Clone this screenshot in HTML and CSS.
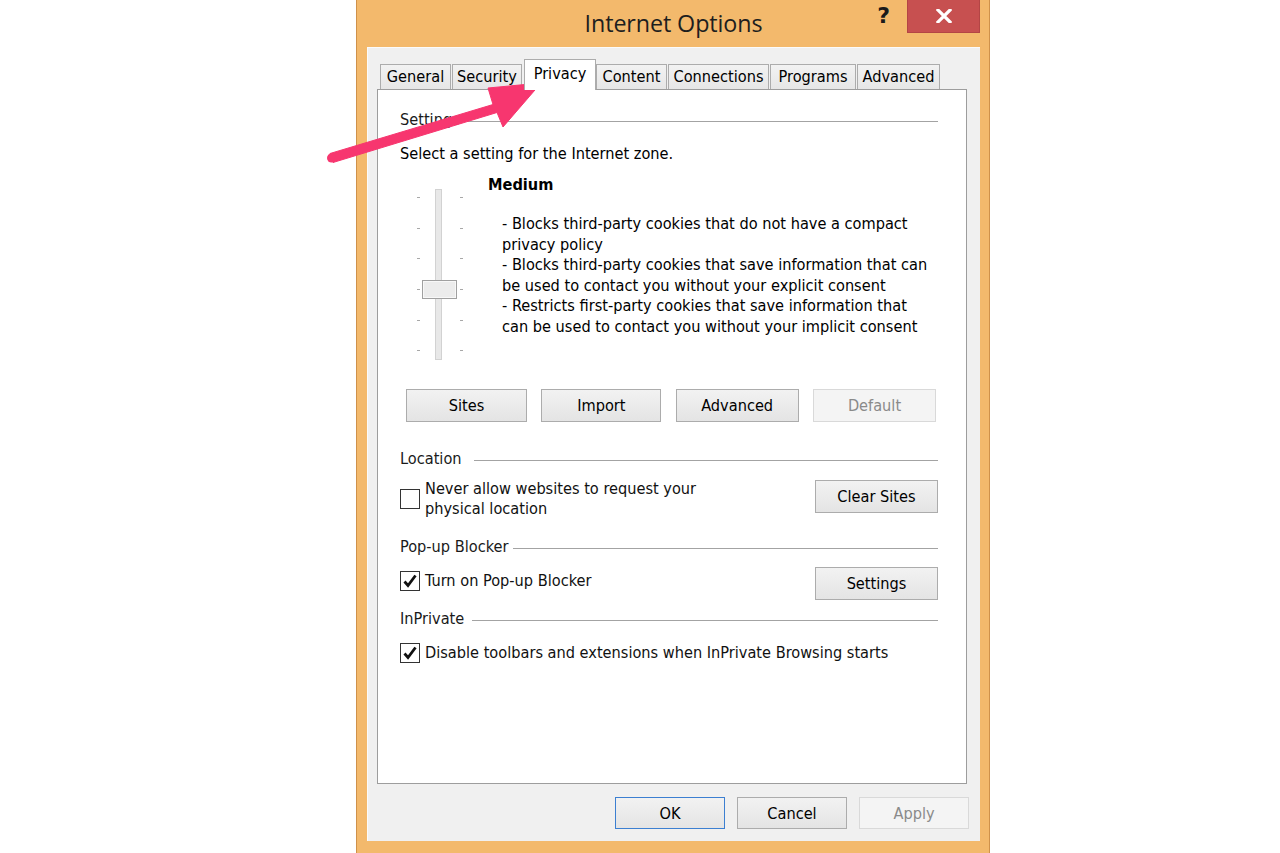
FILE: index.html
```html
<!DOCTYPE html>
<html>
<head>
<meta charset="utf-8">
<link rel="stylesheet" href="styles.css">
</head>
<body>
<div class="window">
  <div class="titlebar">
    <div class="tb-spacer"></div>
    <div class="tb-title">Internet Options</div>
    <div class="tb-controls">
      <span class="tb-help">?</span>
      <span class="tb-close">
        <svg width="16" height="14" viewBox="0 0 16 14"><path d="M2 1 L14 13 M14 1 L2 13" stroke="#fff" stroke-width="3.2" stroke-linecap="square"/></svg>
      </span>
    </div>
  </div>
  <div class="client">
    <div class="tabs">
      <div class="tab w-general">General</div>
      <div class="tab w-security">Security</div>
      <div class="tab tab-sel w-privacy">Privacy</div>
      <div class="tab w-content">Content</div>
      <div class="tab w-connections">Connections</div>
      <div class="tab w-programs">Programs</div>
      <div class="tab w-advanced">Advanced</div>
    </div>
    <div class="panel">
      <div class="group-head g-settings"><span>Settings</span><i class="rule"></i></div>
      <div class="intro">Select a setting for the Internet zone.</div>
      <div class="slider-row">
        <svg class="slider" width="54" height="176" viewBox="0 0 54 176">
          <g stroke="#a8a8a8" stroke-width="1">
            <path d="M4 10.5h3M47 10.5h3"/>
            <path d="M4 41.5h3M47 41.5h3"/>
            <path d="M4 71.5h3M47 71.5h3"/>
            <path d="M4 102.5h3M47 102.5h3"/>
            <path d="M4 133.5h3M47 133.5h3"/>
            <path d="M4 163.5h3M47 163.5h3"/>
          </g>
          <rect x="22.5" y="2.5" width="6" height="170" fill="#e8e8e8" stroke="#d2d2d2"/>
          <rect x="9.5" y="93.5" width="34" height="18" fill="#ececec" stroke="#a0a0a0"/>
          <rect x="10.5" y="94.5" width="32" height="16" fill="none" stroke="#f8f8f8"/>
        </svg>
        <div class="level">
          <div class="level-name">Medium</div>
          <div class="level-desc">- Blocks third-party cookies that do not have a compact<br>privacy policy<br>- Blocks third-party cookies that save information that can<br>be used to contact you without your explicit consent<br>- Restricts first-party cookies that save information that<br>can be used to contact you without your implicit consent</div>
        </div>
      </div>
      <div class="btn-row">
        <button class="btn w121">Sites</button>
        <button class="btn w120">Import</button>
        <button class="btn w123">Advanced</button>
        <button class="btn w123 disabled">Default</button>
      </div>
      <div class="group-head g-location"><span>Location</span><i class="rule"></i></div>
      <div class="opt-row row-location">
        <div class="check-label">
          <span class="cb"></span>
          <span class="cb-text">Never allow websites to request your<br>physical location</span>
        </div>
        <button class="btn w123 btn-side btn-up">Clear Sites</button>
      </div>
      <div class="group-head g-popup"><span>Pop-up Blocker</span><i class="rule"></i></div>
      <div class="opt-row row-popup">
        <div class="check-label lift">
          <span class="cb"><svg width="18" height="18" viewBox="0 0 18 18"><path d="M3.5 9.5 L7 13.5 L14.5 3.5" fill="none" stroke="#111" stroke-width="2.8"/></svg></span>
          <span class="cb-text">Turn on Pop-up Blocker</span>
        </div>
        <button class="btn w123 btn-side">Settings</button>
      </div>
      <div class="group-head g-inprivate"><span>InPrivate</span><i class="rule"></i></div>
      <div class="opt-row row-inprivate">
        <div class="check-label">
          <span class="cb"><svg width="18" height="18" viewBox="0 0 18 18"><path d="M3.5 9.5 L7 13.5 L14.5 3.5" fill="none" stroke="#111" stroke-width="2.8"/></svg></span>
          <span class="cb-text">Disable toolbars and extensions when InPrivate Browsing starts</span>
        </div>
      </div>
    </div>
    <div class="footer">
      <button class="btn fbtn default">OK</button>
      <button class="btn fbtn">Cancel</button>
      <button class="btn fbtn disabled">Apply</button>
    </div>
  </div>
</div>
<svg class="callout" width="1280" height="200" viewBox="0 0 1280 200">
  <polygon points="330,153.5 493,104.5 488,88 541,83 503,127 497,112.5 333,162.5" fill="#f7366f" stroke="#f7366f" stroke-width="1" stroke-linejoin="round"/>
  <circle cx="331.5" cy="158" r="4.5" fill="#f7366f"/>
</svg>
</body>
</html>
```
FILE: styles.css
```css
* { box-sizing: border-box; }
html, body { margin: 0; padding: 0; background: #ffffff; }
body {
  width: 1280px;
  height: 853px;
  overflow: hidden;
  position: relative;
  font-family: "DejaVu Sans Condensed", "DejaVu Sans", sans-serif;
  font-size: 16.2px;
  color: #000;
}

.window {
  margin-left: 356px;
  width: 634px;
  height: 853px;
  background: #f3b96c;
  border-left: 1px solid #cf914a;
  border-right: 1px solid #cf914a;
  padding: 0 9px 0 10px;
  display: flex;
  flex-direction: column;
}

.titlebar {
  height: 47px;
  display: grid;
  grid-template-columns: 1fr auto 1fr;
  align-items: start;
  margin: 0 -10px 0 -10px;
  padding: 0 10px 0 10px;
}
.tb-title {
  font-family: "Open Sans", "Noto Sans", sans-serif;
  font-size: 23.3px;
  color: #1e1e1e;
  padding-top: 6px;
  line-height: 34px;
  letter-spacing: -0.1px;
}
.tb-controls {
  justify-self: end;
  display: flex;
  align-items: flex-start;
}
.tb-help {
  font-family: "DejaVu Sans", sans-serif;
  font-weight: bold;
  font-size: 22px;
  line-height: 30px;
  color: #1a1a1a;
  margin-right: 17px;
  padding-top: 1px;
}
.tb-close {
  width: 73px;
  height: 33px;
  background: #c75050;
  border: 1px solid #b34545;
  border-top: none;
  display: flex;
  align-items: center;
  justify-content: center;
}

.client {
  height: 794px;
  background: #f0f0f0;
  border-top: 1px solid #fbfbfb;
  border-left: 1px solid #fbfbfb;
  padding: 10px 12px 0 9px;
  display: flex;
  flex-direction: column;
}

.tabs {
  height: 31px;
  display: flex;
  align-items: flex-end;
  padding-left: 3px;
}
.tab {
  height: 25px;
  border: 1px solid #acacac;
  border-bottom: none;
  background: linear-gradient(#f2f2f2, #e6e6e6);
  text-align: center;
  line-height: 23px;
  margin-right: 1px;
  white-space: nowrap;
}
.tab-sel {
  position: relative;
  z-index: 2;
  height: 31px;
  margin-bottom: -1px;
  background: #ffffff;
  line-height: 28px;
  margin-left: 1px;
  margin-right: 0;
}
.w-general { width: 71px; }
.w-security { width: 70px; }
.w-privacy { width: 72px; }
.w-content { width: 71px; }
.w-connections { width: 101px; }
.w-programs { width: 86px; }
.w-advanced { width: 83px; }

.panel {
  width: 590px;
  height: 695px;
  background: #ffffff;
  border: 1px solid #9d9d9d;
  padding: 20px 28px 0 22px;
  display: flex;
  flex-direction: column;
}

.group-head {
  display: flex;
  align-items: center;
  line-height: 20px;
  height: 20px;
  color: #1a1a1a;
}
.group-head .rule {
  flex: 1;
  height: 1px;
  background: #a3a3a3;
  margin-top: 3px;
  margin-left: 8px;
}
.g-location .rule { margin-left: 12px; }
.g-popup .rule { margin-left: 5px; }
.g-inprivate .rule { margin-left: 8px; }

.intro {
  margin-top: 14px;
  line-height: 20px;
}

.slider-row {
  margin-top: 11px;
  display: flex;
  align-items: flex-start;
}
.slider {
  margin-left: 13px;
  margin-top: 12px;
  flex: none;
}
.level {
  margin-left: 21px;
}
.level-name {
  font-weight: bold;
  line-height: 20px;
}
.level-desc {
  margin-top: 19px;
  margin-left: 14px;
  line-height: 20.6px;
}

.btn {
  font-family: inherit;
  font-size: 16.2px;
  color: #000;
  height: 33px;
  border: 1px solid #acacac;
  background: linear-gradient(#f2f2f2, #e4e4e4);
  padding: 0;
  margin: 0;
}
.btn.disabled {
  background: #f4f4f4;
  border-color: #d9d9d9;
  color: #8a8a8a;
}
.w121 { width: 121px; }
.w120 { width: 120px; }
.w123 { width: 123px; }

.btn-row {
  margin-top: 26px;
  display: flex;
  justify-content: space-between;
  padding: 0 2px 0 6px;
}

.g-location { margin-top: 27px; }
.g-popup { margin-top: 18px; }
.g-inprivate { margin-top: 9px; }

.opt-row {
  display: flex;
  align-items: center;
  justify-content: space-between;
}
.row-location { margin-top: 10px; }
.row-popup { margin-top: 10px; }
.row-inprivate { margin-top: 14px; }

.btn-side { margin-right: 0; }
.btn-up { margin-bottom: 6px; }

.check-label {
  display: flex;
  align-items: center;
  line-height: 20px;
}
.check-label.lift { margin-bottom: 5px; }
.cb {
  width: 20px;
  height: 20px;
  border: 1px solid #333333;
  background: #ffffff;
  margin-right: 5px;
  flex: none;
  display: flex;
  align-items: center;
  justify-content: center;
}
.cb-text { color: #111; }

.footer {
  margin-top: 13px;
  display: flex;
  justify-content: flex-end;
  gap: 12px;
  margin-right: -1px;
}
.fbtn {
  width: 110px;
  height: 32px;
}
.fbtn.default {
  border-color: #3c7fd1;
}

.callout {
  position: absolute;
  left: 0;
  top: 0;
  pointer-events: none;
}
```
